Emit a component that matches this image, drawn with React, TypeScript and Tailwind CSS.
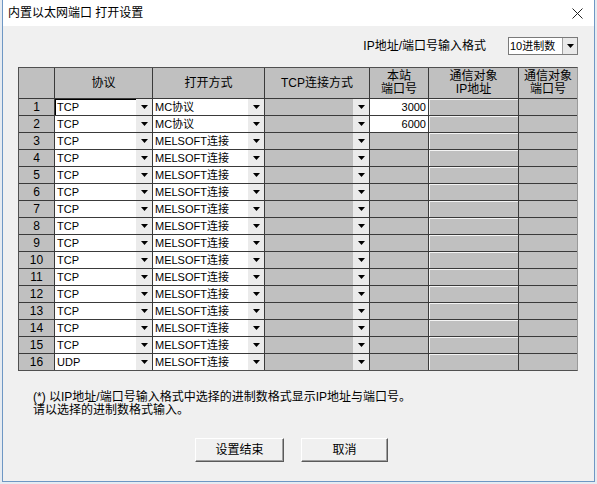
import { Fragment } from 'react';

const rows = Array.from({ length: 16 }, (_, i) => ({
  no: i + 1,
  protocol: i === 15 ? 'UDP' : 'TCP',
  openMode: i < 2 ? 'MC协议' : 'MELSOFT连接',
  port: i === 0 ? '3000' : i === 1 ? '6000' : '',
}));

const Arrow = () => (
  <svg width="7" height="4" viewBox="0 0 7 4" className="block">
    <path d="M0 0h7L3.5 4z" fill="#000" />
  </svg>
);

const DropButton = () => (
  <div className="w-[16px] h-full bg-[#ebebeb] flex items-center justify-center shrink-0">
    <Arrow />
  </div>
);

const ComboCell = ({ text, disabled, focused }: { text?: string; disabled?: boolean; focused?: boolean }) => (
  <div
    className={
      'flex items-stretch h-[16px] ' +
      (disabled ? 'bg-[#c0c0c0]' : 'bg-white') +
      (focused ? ' shadow-[inset_1px_1px_0_#000]' : '')
    }
  >
    <div className="flex-1 pl-[2px] leading-[16px] truncate">{text}</div>
    <DropButton />
  </div>
);

const HeaderCell = ({ children }: { children?: React.ReactNode }) => (
  <div className="bg-[#c0c0c0] h-[30px] flex flex-col items-center justify-center text-center text-[12px] leading-[13px]">
    {children}
  </div>
);

const App = () => {
  return (
    <div className="w-[597px] h-[484px] bg-[#e6ebf1] overflow-hidden font-['Liberation_Sans','Noto_Sans_CJK_SC',sans-serif] text-black">
      <div className="ml-[2px] w-[593px] h-[482px] border-l border-r border-b border-[#6e97c4] bg-[#f0f0f0] flex flex-col">
        {/* title bar */}
        <div className="h-[26px] bg-white flex items-center justify-between pl-[5px] pr-[11px] shrink-0">
          <span className="text-[12px]">内置以太网端口 打开设置</span>
          <svg width="11" height="11" viewBox="0 0 11 11">
            <path d="M0.5 0.5l10 10M10.5 0.5l-10 10" stroke="#222" strokeWidth="1" />
          </svg>
        </div>

        <div className="px-[15px] flex flex-col">
          {/* input format */}
          <div className="mt-[11px] h-[18px] flex items-center justify-end pr-[1px]">
            <span className="text-[12px]">IP地址/端口号输入格式</span>
            <div className="ml-[22px] w-[70px] h-[18px] bg-white border border-[#7a7a7a] flex items-stretch">
              <div className="flex-1 text-[11px] leading-[16px] pl-[1px]">10进制数</div>
              <div className="w-[15px] bg-[#e9e9e9] border-l border-[#a0a0a0] flex items-center justify-center">
                <Arrow />
              </div>
            </div>
          </div>

          {/* table */}
          <div className="mt-[12px] w-[560px] bg-[#3a3a3a] border-t border-l border-b border-[#505050] border-r border-r-[#9a9a9a] grid grid-cols-[35px_97px_111px_104px_58px_89px_58px] gap-px text-[11px]">
            <HeaderCell />
            <HeaderCell>协议</HeaderCell>
            <HeaderCell>打开方式</HeaderCell>
            <HeaderCell>TCP连接方式</HeaderCell>
            <HeaderCell>
              <span>本站</span>
              <span>端口号</span>
            </HeaderCell>
            <HeaderCell>
              <span>通信对象</span>
              <span>IP地址</span>
            </HeaderCell>
            <HeaderCell>
              <span>通信对象</span>
              <span>端口号</span>
            </HeaderCell>

            {rows.map((r) => (
              <Fragment key={r.no}>
                <div className="bg-[#c0c0c0] h-[16px] leading-[16px] text-center text-[12px]">{r.no}</div>
                <ComboCell text={r.protocol} focused={r.no === 1} />
                <ComboCell text={r.openMode} />
                <ComboCell disabled />
                <div className={'h-[16px] leading-[16px] text-right pr-[2px] ' + (r.port ? 'bg-white' : 'bg-[#c0c0c0]')}>
                  {r.port}
                </div>
                <div className="h-[16px] bg-[#c0c0c0] border-t border-l border-[#f4f4f4]" />
                <div className="h-[16px] bg-[#c0c0c0]" />
              </Fragment>
            ))}
          </div>

          {/* note */}
          <div className="mt-[20px] pl-[15px] text-[12px] leading-[13px]">
            <div>(*) 以IP地址/端口号输入格式中选择的进制数格式显示IP地址与端口号。</div>
            <div>请以选择的进制数格式输入。</div>
          </div>

          {/* buttons */}
          <div className="mt-[21px] pl-[177px] flex gap-[17px]">
            <button className="w-[89px] h-[24px] bg-[#f0f0f0] border border-t-[#ffffff] border-l-[#ffffff] border-r-[#5a5a5a] border-b-[#5a5a5a] shadow-[inset_-1px_-1px_0_#a0a0a0] text-[12px]">
              设置结束
            </button>
            <button className="w-[87px] h-[24px] bg-[#f0f0f0] border border-t-[#ffffff] border-l-[#ffffff] border-r-[#5a5a5a] border-b-[#5a5a5a] shadow-[inset_-1px_-1px_0_#a0a0a0] text-[12px]">
              取消
            </button>
          </div>
        </div>
      </div>
    </div>
  );
};

export default App;
